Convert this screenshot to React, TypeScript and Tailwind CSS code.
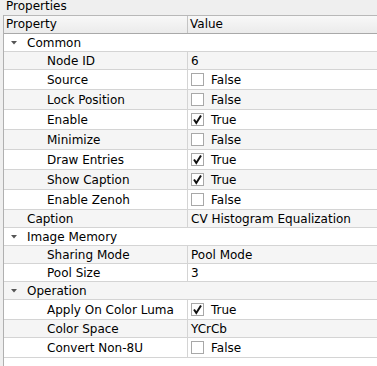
type Row =
  | { kind: "group"; label: string }
  | { kind: "text"; label: string; value: string; level: number }
  | { kind: "bool"; label: string; value: boolean; level: number };

const ROWS: Row[] = [
  { kind: "group", label: "Common" },
  { kind: "text", label: "Node ID", value: "6", level: 2 },
  { kind: "bool", label: "Source", value: false, level: 2 },
  { kind: "bool", label: "Lock Position", value: false, level: 2 },
  { kind: "bool", label: "Enable", value: true, level: 2 },
  { kind: "bool", label: "Minimize", value: false, level: 2 },
  { kind: "bool", label: "Draw Entries", value: true, level: 2 },
  { kind: "bool", label: "Show Caption", value: true, level: 2 },
  { kind: "bool", label: "Enable Zenoh", value: false, level: 2 },
  { kind: "text", label: "Caption", value: "CV Histogram Equalization", level: 1 },
  { kind: "group", label: "Image Memory" },
  { kind: "text", label: "Sharing Mode", value: "Pool Mode", level: 2 },
  { kind: "text", label: "Pool Size", value: "3", level: 2 },
  { kind: "group", label: "Operation" },
  { kind: "bool", label: "Apply On Color Luma", value: true, level: 2 },
  { kind: "text", label: "Color Space", value: "YCrCb", level: 2 },
  { kind: "bool", label: "Convert Non-8U", value: false, level: 2 },
];

function CheckBox({ checked }: { checked: boolean }) {
  return (
    <div className="w-[13px] h-[13px] border border-[#a8a8a8] bg-white flex items-center justify-center shrink-0">
      {checked && (
        <svg width="11" height="11" viewBox="0 0 11 11">
          <path d="M2 5.5 L4.3 9 L9 1.5" fill="none" stroke="#111" strokeWidth="2" strokeLinejoin="miter" />
        </svg>
      )}
    </div>
  );
}

export default function App() {
  return (
    <div
      className="w-[377px] h-[366px] bg-[#efefef] overflow-hidden text-[12px] text-black"
      style={{ fontFamily: '"DejaVu Sans", sans-serif' }}
    >
      {/* Dock title */}
      <div className="h-[15px] pl-[6px] leading-[13px]">Properties</div>

      {/* Tree */}
      <div className="ml-[3px] border-l border-[#b0b0b0] bg-white h-[351px]">
        {/* Header */}
        <div className="flex h-[19px] border-t border-b border-t-[#b8b8b8] border-b-[#a9a9a9] bg-gradient-to-b from-[#f8f8f8] to-[#ebebeb] leading-[17px]">
          <div className="w-[184px] pl-[2px] border-r border-[#c4c4c4]">Property</div>
          <div className="flex-1 pl-[2px]">Value</div>
        </div>

        {ROWS.map((row, i) => {
          const bg = i % 2 === 1 ? "bg-[#f5f5f5]" : "bg-white";
          if (row.kind === "group") {
            return (
              <div key={i} className={`flex items-center h-[18px] border-b border-[#d4d4d4] ${bg}`}>
                <svg width="6" height="4" viewBox="0 0 6 4" className="ml-[7px] mr-[10px]">
                  <path d="M0 0 H6 L3 3.5 Z" fill="#555" />
                </svg>
                <span>{row.label}</span>
              </div>
            );
          }
          const h = row.kind === "bool" ? "h-[20px]" : "h-[18px]";
          const indent = row.level === 2 ? "pl-[43px]" : "pl-[23px]";
          return (
            <div key={i} className={`flex ${h} border-b border-[#d4d4d4] ${bg}`}>
              <div className={`w-[184px] ${indent} flex items-center border-r border-[#d4d4d4]`}>{row.label}</div>
              <div className="flex-1 flex items-center pl-[3px]">
                {row.kind === "bool" ? (
                  <>
                    <CheckBox checked={row.value} />
                    <span className="ml-[7px]">{row.value ? "True" : "False"}</span>
                  </>
                ) : (
                  <span>{row.value}</span>
                )}
              </div>
            </div>
          );
        })}
      </div>
    </div>
  );
}
